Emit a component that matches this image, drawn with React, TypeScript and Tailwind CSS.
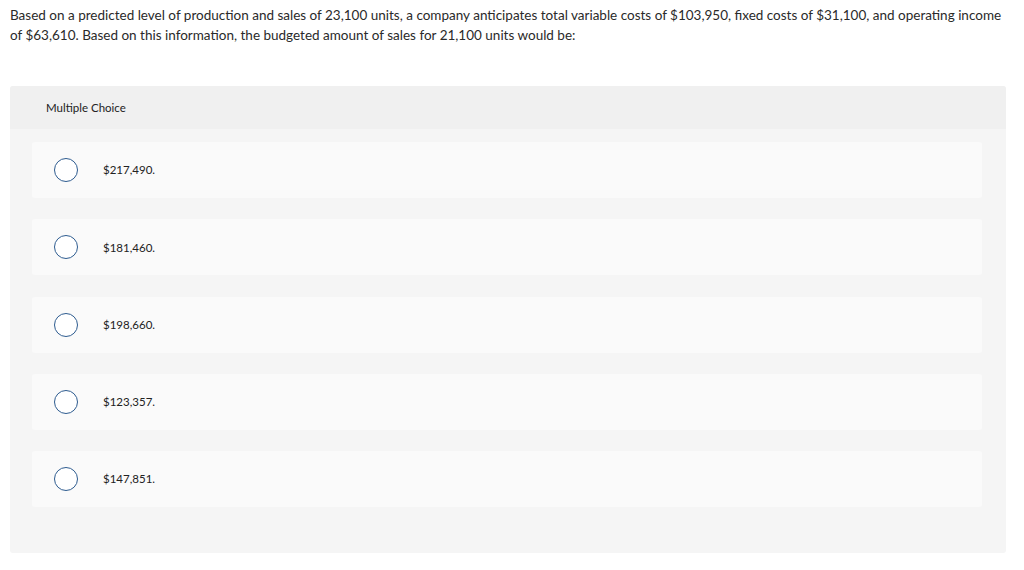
import React from "react";

const options = ["$217,490.", "$181,460.", "$198,660.", "$123,357.", "$147,851."];

export default function App() {
  return (
    <div className="w-[1024px] h-[570px] bg-white" style={{ fontFamily: 'Lato, "Liberation Sans", sans-serif' }}>
      <div className="pt-[6px] pl-[10px] w-[1006px] text-[13.5px] leading-[19.5px] text-[#2a2a2a]">
        Based on a predicted level of production and sales of 23,100 units, a company anticipates total variable costs of $103,950, fixed costs of $31,100, and operating income of $63,610. Based on this information, the budgeted amount of sales for 21,100 units would be:
      </div>
      <div className="mt-[41px] ml-[10px] w-[996px] h-[467px] bg-[#f5f5f5] rounded-[3px] overflow-hidden">
        <div className="h-[43px] bg-[#f0f0f0] flex items-center pl-[36px] text-[11.5px] text-[#222]">
          Multiple Choice
        </div>
        <div className="flex flex-col gap-[21.25px] pt-[13px] pl-[22px] pr-[24px]">
          {options.map((o) => (
            <div key={o} className="h-[56px] bg-[#fafafa] rounded-[3px] flex items-center">
              <div className="ml-[22px] w-[24px] h-[24px] rounded-full border-[1.5px] border-[#2d5b8f] bg-white shrink-0" />
              <div className="ml-[25px] text-[11.5px] text-[#222]">{o}</div>
            </div>
          ))}
        </div>
      </div>
    </div>
  );
}
